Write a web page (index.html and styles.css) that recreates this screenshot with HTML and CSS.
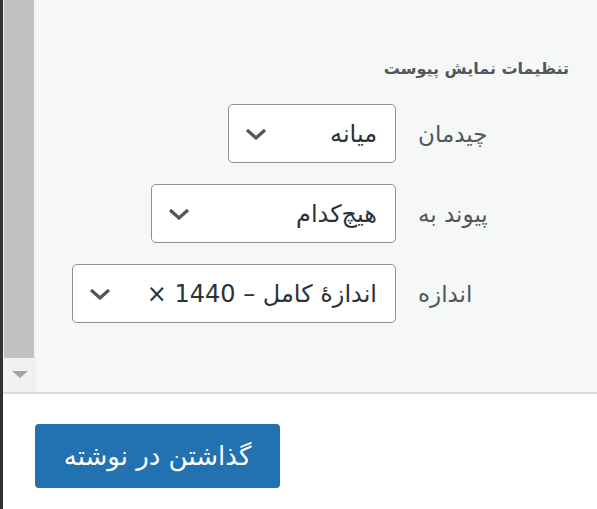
FILE: index.html
```html
<!DOCTYPE html>
<html lang="fa" dir="rtl">
<head>
  <meta charset="utf-8">
  <link rel="stylesheet" href="styles.css">
</head>
<body>
  <div class="frame">
    <div class="main">
      <div class="top">
        <div class="sidebar">
          <h2 class="title">تنظیمات نمایش پیوست</h2>
          <div class="setting">
            <span class="name">چیدمان</span>
            <div class="select select-align">
              <span class="value">میانه</span>
              <svg class="chevron" width="22" height="12" viewBox="0 0 22 12"><polyline points="2,2 11,10 20,2" fill="none" stroke="#50575e" stroke-width="3.2"/></svg>
            </div>
          </div>
          <div class="setting">
            <span class="name">پیوند به</span>
            <div class="select select-link">
              <span class="value">هیچ‌کدام</span>
              <svg class="chevron" width="22" height="12" viewBox="0 0 22 12"><polyline points="2,2 11,10 20,2" fill="none" stroke="#50575e" stroke-width="3.2"/></svg>
            </div>
          </div>
          <div class="setting">
            <span class="name">اندازه</span>
            <div class="select select-size">
              <span class="value">اندازهٔ کامل – 1440 ×</span>
              <svg class="chevron" width="22" height="12" viewBox="0 0 22 12"><polyline points="2,2 11,10 20,2" fill="none" stroke="#50575e" stroke-width="3.2"/></svg>
            </div>
          </div>
        </div>
        <div class="scrollbar">
          <div class="thumb"></div>
          <div class="arrow"></div>
        </div>
      </div>
      <div class="toolbar">
        <button type="button" class="btn">گذاشتن در نوشته</button>
      </div>
    </div>
    <div class="edge"></div>
  </div>
</body>
</html>
```

FILE: styles.css
```css
html, body {
  margin: 0;
  height: 100%;
}

body {
  font-family: "DejaVu Sans", sans-serif;
  overflow: hidden;
  background-color: #fff;
}

.frame {
  display: flex;
  height: 509px;
}

.edge {
  width: 3px;
  background-color: #333;
}

.main {
  flex: 1;
  display: flex;
  flex-direction: column;
}

.top {
  display: flex;
  height: 392px;
  border-bottom: 2px solid #dcdcde;
}

.sidebar {
  flex: 1;
  background-color: #f6f7f7;
  padding: 56px 28px 0 0;
}

.title {
  margin: 0 0 22px 0;
  font-size: 16px;
  line-height: 26px;
  font-weight: bold;
  color: #50575e;
}

.setting {
  display: flex;
  align-items: center;
  margin-bottom: 21px;
}

.name {
  width: 151px;
  margin-left: 22px;
  text-align: left;
  font-size: 23px;
  color: #50575e;
}

.select {
  box-sizing: border-box;
  height: 59px;
  display: flex;
  align-items: center;
  justify-content: space-between;
  padding: 0 18px 0 16px;
  border: 1.5px solid #8c8f94;
  border-radius: 5px;
  background-color: #fff;
  color: #2c3338;
  font-size: 24px;
}

.select-align {
  width: 168px;
}

.select-link {
  width: 245px;
}

.select-size {
  width: 324px;
}

.value {
  white-space: nowrap;
}

.chevron {
  display: block;
}

.scrollbar {
  width: 33px;
  background-color: #f1f1f1;
  display: flex;
  flex-direction: column;
  align-items: center;
}

.thumb {
  width: 30px;
  height: 358px;
  margin-right: 1px;
  background-color: #c1c1c1;
}

.arrow {
  margin-top: 13px;
  width: 0;
  height: 0;
  border-left: 8px solid transparent;
  border-right: 8px solid transparent;
  border-top: 7px solid #a3a3a3;
}

.toolbar {
  flex: 1;
  background-color: #fff;
  padding-top: 30px;
  display: flex;
  justify-content: flex-end;
  padding-left: 32px;
}

.btn {
  width: 245px;
  height: 64px;
  padding: 0;
  background-color: #2271b1;
  color: #fff;
  border: none;
  border-radius: 4px;
  font-family: "DejaVu Sans", sans-serif;
  font-size: 26px;
  cursor: pointer;
}
```
